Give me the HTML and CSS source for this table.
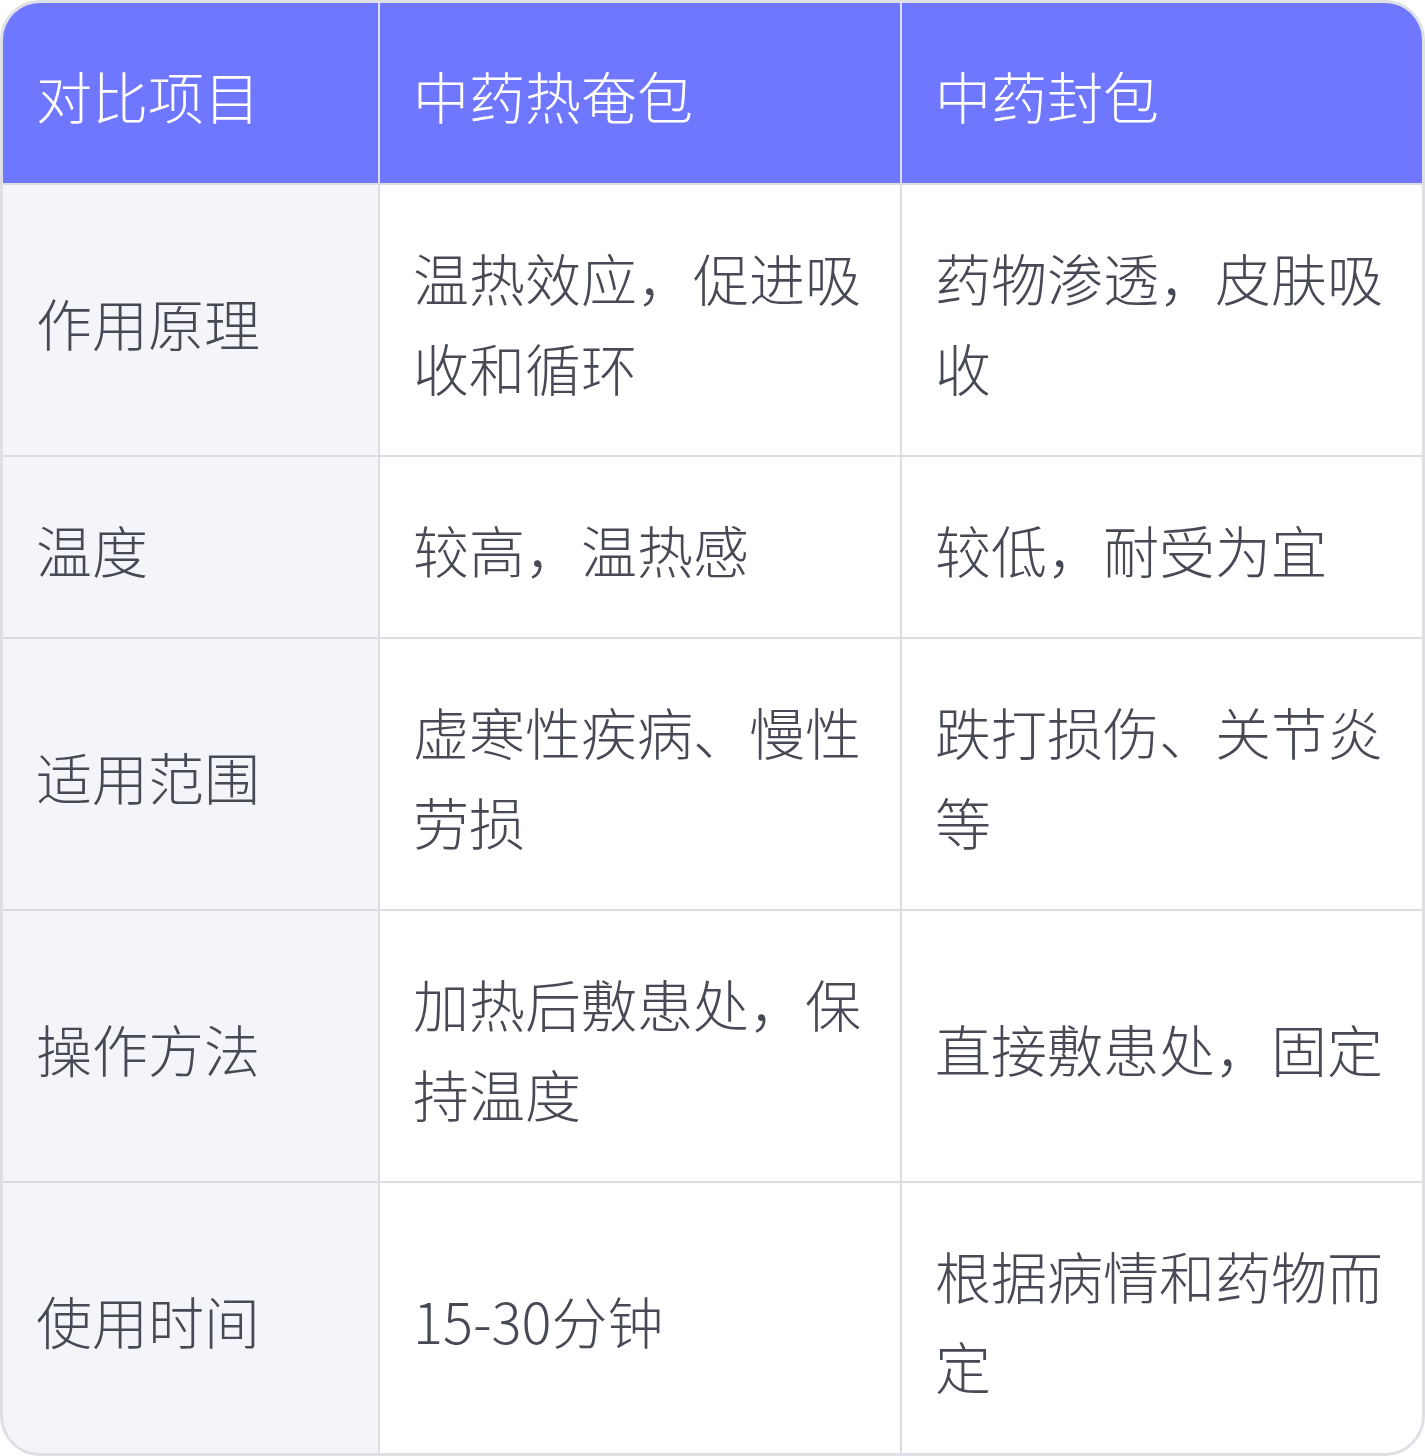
FILE: index.html
```html
<!DOCTYPE html>
<html lang="zh-CN">
<head>
<meta charset="utf-8">
<link rel="stylesheet" href="styles.css">
</head>
<body>
<div class="table">
  <div class="cell head">对比项目</div>
  <div class="cell head">中药热奄包</div>
  <div class="cell head">中药封包</div>

  <div class="cell label">作用原理</div>
  <div class="cell">温热效应，促进吸收和循环</div>
  <div class="cell">药物渗透，皮肤吸收</div>

  <div class="cell label">温度</div>
  <div class="cell">较高，温热感</div>
  <div class="cell">较低，耐受为宜</div>

  <div class="cell label">适用范围</div>
  <div class="cell">虚寒性疾病、慢性劳损</div>
  <div class="cell">跌打损伤、关节炎等</div>

  <div class="cell label">操作方法</div>
  <div class="cell">加热后敷患处，保持温度</div>
  <div class="cell">直接敷患处，固定</div>

  <div class="cell label">使用时间</div>
  <div class="cell">15-30分钟</div>
  <div class="cell">根据病情和药物而定</div>
</div>
</body>
</html>
```

FILE: styles.css
```css
html, body {
  margin: 0;
  padding: 0;
  background: #ffffff;
}

.table {
  box-sizing: border-box;
  width: 1425px;
  height: 1456px;
  border: 3px solid #dfe0e5;
  border-radius: 40px;
  overflow: hidden;
  display: grid;
  grid-template-columns: 375px 520px 520px;
  grid-template-rows: 180px 270px 180px 270px 270px 270px;
  gap: 2px;
  background: #dcdde3;
  font-family: "Noto Sans CJK SC", "Noto Sans", sans-serif;
  font-weight: 200;
  font-size: 56px;
  line-height: 90px;
  color: #474a55;
}

.cell {
  box-sizing: border-box;
  background: #ffffff;
  padding: 47px 28px 43px 33px;
  display: flex;
  align-items: center;
}

.cell.head {
  background: #7077ff;
  color: #ffffff;
}

.cell.label {
  background: #f4f5f9;
}
```
